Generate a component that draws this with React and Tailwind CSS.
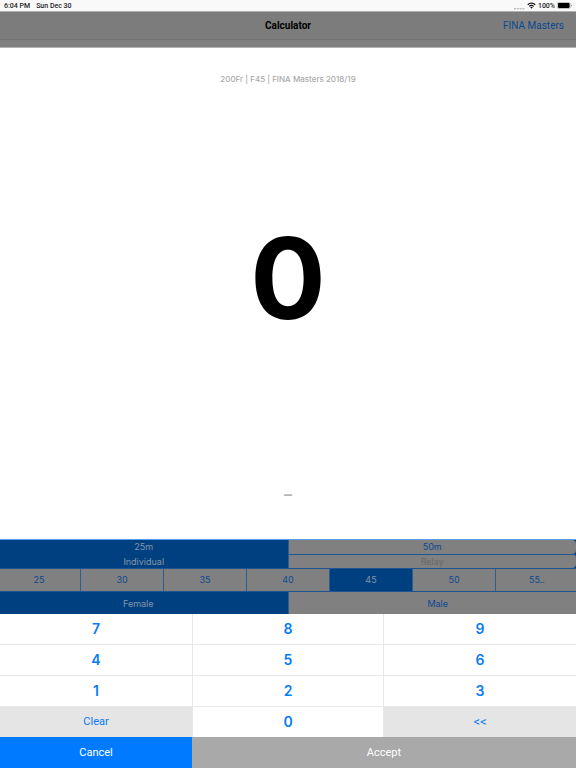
import React, { useState } from "react";

const ages = ["25", "30", "35", "40", "45", "50", "55.."];
const keys = ["7", "8", "9", "4", "5", "6", "1", "2", "3", "Clear", "0", "<<"];

function Segmented({ label, options, value, onChange, disabled = [], className, textClass = "", ruled = false }) {
  return (
    <div role="group" aria-label={label} className={`flex overflow-hidden ${className}`}>
      {options.map((option, i) => {
        const selected = option === value;
        const off = disabled.includes(option);
        const tone = selected
          ? "bg-[#004080] text-[#8495a8]"
          : off
            ? "bg-[#808080] text-[#696969]"
            : "bg-[#808080] text-[#0b4a93]";
        const rule = ruled ? (selected ? "border-t border-t-[#004080]" : "border-t border-t-[#1c5592]") : "";
        return (
          <button
            key={option}
            type="button"
            aria-pressed={selected}
            disabled={off}
            onClick={() => onChange(option)}
            className={`flex min-w-0 flex-1 items-center justify-center ${tone} ${rule} ${textClass} ${i > 0 ? "border-l border-l-[#2a5c96]" : ""}`}
          >
            {option}
          </button>
        );
      })}
    </div>
  );
}

function StatusBar() {
  return (
    <div className="flex h-3 shrink-0 items-center justify-between border-b border-[#b0b0b0] bg-[#f9f9f9] px-1 text-[7px] leading-3 font-medium text-[#222]">
      <div className="flex gap-1.5">
        <span>6:04 PM</span>
        <span>Sun Dec 30</span>
      </div>
      <div className="flex items-center gap-0.5">
        <svg width="11" height="8" viewBox="0 0 11 8" fill="#bcbcbc" aria-hidden="true">
          <rect x="0" y="6" width="2" height="1.4" />
          <rect x="2.8" y="6" width="2" height="1.4" />
          <rect x="5.6" y="6" width="2" height="1.4" />
          <rect x="8.4" y="6" width="2" height="1.4" />
        </svg>
        <svg width="9" height="7" viewBox="0 0 18 14" fill="none" stroke="#111" aria-hidden="true">
          <path d="M1.5 5.5a10.6 10.6 0 0 1 15 0" strokeWidth="2.4" />
          <path d="M4.6 8.6a6.2 6.2 0 0 1 8.8 0" strokeWidth="2.4" />
          <path d="M9 13.4 6.4 10.7a3.7 3.7 0 0 1 5.2 0z" fill="#111" stroke="none" />
        </svg>
        <span>100%</span>
        <svg width="15" height="7" viewBox="0 0 15 7" aria-hidden="true">
          <rect x="0.3" y="0.5" width="13" height="6" rx="1.5" fill="#fff" stroke="#888" strokeWidth="0.5" />
          <rect x="1" y="1.1" width="11.6" height="4.8" rx="0.8" fill="#000" />
          <path d="M14 2.4v2.2c.6-.2.9-.6.9-1.1s-.3-.9-.9-1.1z" fill="#888" />
        </svg>
      </div>
    </div>
  );
}

export default function App() {
  const [course, setCourse] = useState("25m");
  const [kind, setKind] = useState("Individual");
  const [age, setAge] = useState("45");
  const [sex, setSex] = useState("Female");

  return (
    <div className="flex min-h-screen flex-col overflow-hidden bg-white font-['Roboto','Liberation_Sans',sans-serif]">
      <StatusBar />
      <header className="grid h-7 shrink-0 grid-cols-3 items-center border-b border-[#747474] bg-[#7c7c7c] px-3 text-[10px]">
        <span />
        <h1 className="text-center font-bold text-black">Calculator</h1>
        <a href="#masters" className="justify-self-end text-[#0a4a91]">FINA Masters</a>
      </header>
      <div className="h-2 shrink-0 border-b border-[#b4b4b4] bg-[#808080]" />

      <main className="flex flex-1 flex-col items-center justify-between pt-6 pb-10 font-['Inter','Liberation_Sans',sans-serif]">
        <p className="text-[8px] leading-[14px] font-medium text-[#aaa]">200Fr | F45 | FINA Masters 2018/19</p>
        <output className="mb-5 text-[112px] leading-none font-bold text-black">0</output>
        <p className="text-base leading-[10px] font-semibold text-[#b4b4b4]">–</p>
      </main>

      <section aria-label="Event" className="shrink-0 overflow-hidden border-t border-[#5a9fec] bg-[#004080] font-['Inter','Liberation_Sans',sans-serif] text-[9px]">
        <Segmented label="Course" options={["25m", "50m"]} value={course} onChange={setCourse} className="h-[14px] rounded-sm" />
        <Segmented label="Type" options={["Individual", "Relay"]} value={kind} onChange={setKind} disabled={["Relay"]} className="h-[14px] rounded-sm" ruled />
        <Segmented label="Age group" options={ages} value={age} onChange={setAge} className="-mx-0.5 h-6 border-y border-[#1c5592]" />
        <Segmented label="Sex" options={["Female", "Male"]} value={sex} onChange={setSex} className="-mx-[11px] h-[22px]" textClass="pt-0.5" />
      </section>

      <section aria-label="Keypad" className="grid shrink-0 grid-cols-3 text-[#087bf7]">
        {keys.map((key, i) => {
          const action = key === "Clear" || key === "<<";
          return (
            <button
              key={key}
              type="button"
              aria-label={key === "<<" ? "Delete" : undefined}
              className={`border-[#e9e9e9] ${i % 3 === 1 ? "border-x" : ""} ${i < 9 ? "h-[31px] border-b" : "h-[30px]"} ${action ? "bg-[#e5e5e5]" : "bg-white font-['Inter','Liberation_Sans',sans-serif] text-sm font-semibold"} ${key === "Clear" ? "text-[11px]" : key === "<<" ? "text-[13px]" : ""}`}
            >
              {key}
            </button>
          );
        })}
      </section>
      <footer className="grid h-[31px] shrink-0 grid-cols-3 text-[11px] text-white">
        <button type="button" className="bg-[#007bff] pt-0.5">Cancel</button>
        <button type="button" className="col-span-2 bg-[#a9a9a9] pt-0.5">Accept</button>
      </footer>
    </div>
  );
}
